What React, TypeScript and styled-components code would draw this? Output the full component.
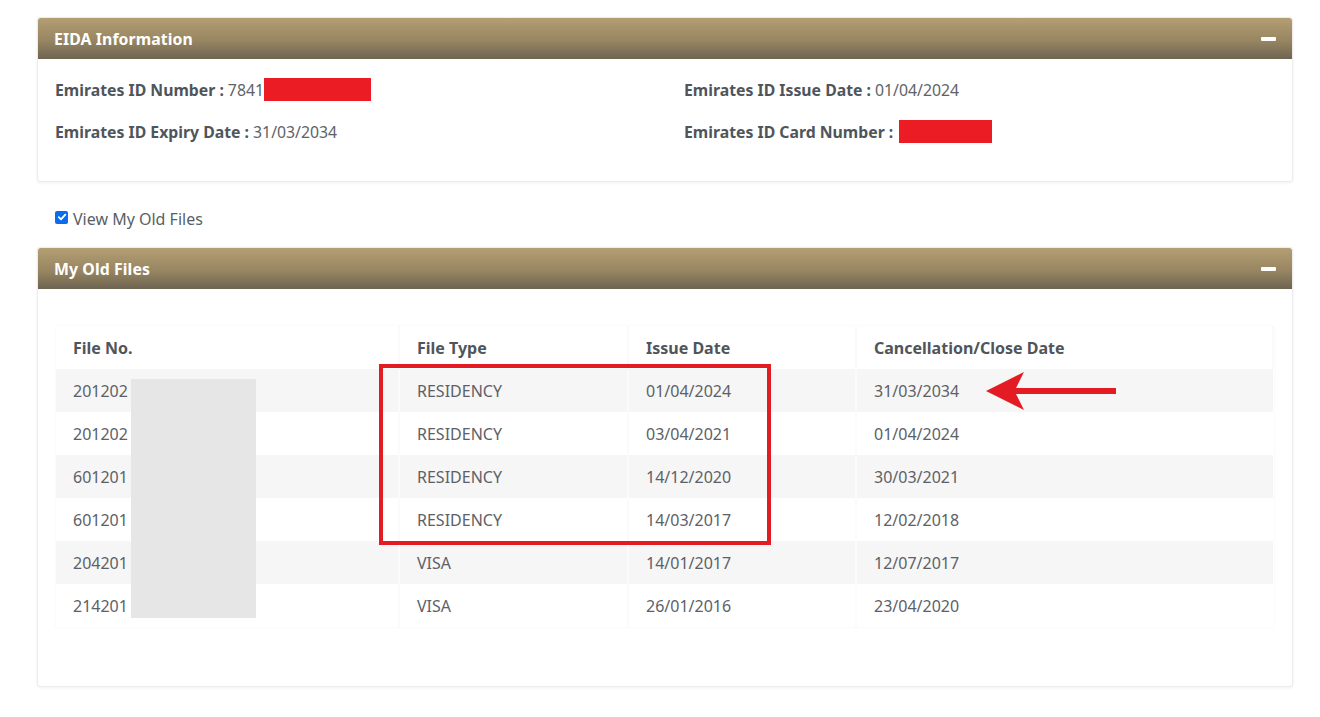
import React from 'react';
import styled, { createGlobalStyle } from 'styled-components';

const GlobalStyle = createGlobalStyle`
  body {
    margin: 0;
    background: #ffffff;
    font-family: "Noto Sans", "Open Sans", sans-serif;
    color: #555a60;
  }
`;

const Page = styled.div`
  padding: 17px 27px 20px 37px;
  display: flex;
  flex-direction: column;
`;

const Panel = styled.section`
  border: 1px solid #ececec;
  border-radius: 3px;
  box-shadow: 0 1px 3px rgba(0, 0, 0, 0.06);
  background: #fff;
`;

const PanelHeader = styled.div`
  height: 41px;
  display: flex;
  align-items: center;
  justify-content: space-between;
  padding: 0 16px 0 16px;
  background: linear-gradient(to bottom, #b49e74 0%, #978661 55%, #6d6451 100%);
  border-radius: 3px 3px 0 0;
`;

const PanelTitle = styled.h3`
  margin: 0;
  font-size: 15.8px;
  font-weight: 700;
  color: #ffffff;
  letter-spacing: 0.1px;
`;

const Collapse = styled.span`
  width: 15px;
  height: 4px;
  background: #ffffff;
  border-radius: 1px;
`;

const InfoBody = styled.div`
  display: grid;
  grid-template-columns: 629px 1fr;
  row-gap: 19px;
  padding: 19px 17px 38px;
`;

const InfoItem = styled.div`
  display: flex;
  align-items: center;
  height: 23px;
  font-size: 15.8px;
  color: #5e6267;
`;

const Label = styled.span`
  font-weight: 700;
  color: #4f555b;
  margin-right: 4px;
`;

const Redacted = styled.span<{ $w: number }>`
  display: inline-block;
  width: ${p => p.$w}px;
  height: 23px;
  background: #ec1c24;
`;

const CheckRow = styled.label`
  display: flex;
  align-items: center;
  gap: 5px;
  padding: 26px 0 17px 18px;
  font-size: 16px;
  color: #5a5f65;
`;

const Check = styled.span`
  width: 13px;
  height: 13px;
  border-radius: 2px;
  background: #0b6cf0;
  display: flex;
  align-items: center;
  justify-content: center;
  margin-top: -4px;
`;

const TableBody = styled.div`
  padding: 37px 18px 59px;
`;

const TableWrap = styled.div`
  position: relative;
  box-shadow: 0 0 2px rgba(0, 0, 0, 0.06);
`;

const Table = styled.table`
  width: 100%;
  border-collapse: collapse;
  font-size: 16px;
  table-layout: fixed;
`;

const Th = styled.th<{ $w?: number }>`
  box-sizing: border-box;
  text-align: left;
  font-weight: 700;
  color: #4f555b;
  height: 43px;
  padding: 0 17px;
  border-right: 2px solid #fafafa;
  width: ${p => (p.$w ? `${p.$w}px` : 'auto')};
`;

const Tr = styled.tr<{ $striped: boolean }>`
  background: ${p => (p.$striped ? '#f6f6f6' : '#ffffff')};
`;

const Td = styled.td`
  height: 43px;
  padding: 0 17px;
  color: #5d6166;
  border-right: 2px solid #fbfbfb;
  &:last-child { border-right: none; }
`;

const GreyMask = styled.div`
  position: absolute;
  left: 75px;
  top: 53px;
  width: 125px;
  height: 239px;
  background: #e6e6e6;
`;

const RedBox = styled.div`
  position: absolute;
  left: 323px;
  top: 38px;
  width: 392px;
  height: 181px;
  border: 4px solid #e31b23;
  box-sizing: border-box;
`;

const Arrow = styled.svg`
  position: absolute;
  left: 928px;
  top: 45px;
`;

const rows = [
  ['201202', 'RESIDENCY', '01/04/2024', '31/03/2034'],
  ['201202', 'RESIDENCY', '03/04/2021', '01/04/2024'],
  ['601201', 'RESIDENCY', '14/12/2020', '30/03/2021'],
  ['601201', 'RESIDENCY', '14/03/2017', '12/02/2018'],
  ['204201', 'VISA', '14/01/2017', '12/07/2017'],
  ['214201', 'VISA', '26/01/2016', '23/04/2020'],
];

export default function App() {
  return (
    <Page>
      <GlobalStyle />
      <Panel>
        <PanelHeader>
          <PanelTitle>EIDA Information</PanelTitle>
          <Collapse />
        </PanelHeader>
        <InfoBody>
          <InfoItem>
            <Label>Emirates ID Number :</Label>7841<Redacted $w={107} />
          </InfoItem>
          <InfoItem>
            <Label>Emirates ID Issue Date :</Label>01/04/2024
          </InfoItem>
          <InfoItem>
            <Label>Emirates ID Expiry Date :</Label>31/03/2034
          </InfoItem>
          <InfoItem>
            <Label>Emirates ID Card Number :</Label>
            <Redacted $w={93} style={{ marginLeft: 2 }} />
          </InfoItem>
        </InfoBody>
      </Panel>

      <CheckRow>
        <Check>
          <svg width="10" height="10" viewBox="0 0 10 10">
            <path d="M1.8 5.2 L4 7.4 L8.3 2.6" fill="none" stroke="#fff" strokeWidth="1.8" strokeLinecap="round" strokeLinejoin="round" />
          </svg>
        </Check>
        View My Old Files
      </CheckRow>

      <Panel>
        <PanelHeader>
          <PanelTitle>My Old Files</PanelTitle>
          <Collapse />
        </PanelHeader>
        <TableBody>
          <TableWrap>
            <Table>
              <thead>
                <tr>
                  <Th $w={343}>File No.</Th>
                  <Th $w={229}>File Type</Th>
                  <Th $w={228}>Issue Date</Th>
                  <Th>Cancellation/Close Date</Th>
                </tr>
              </thead>
              <tbody>
                {rows.map((r, i) => (
                  <Tr key={i} $striped={i % 2 === 0}>
                    {r.map((c, j) => (
                      <Td key={j}>{c}</Td>
                    ))}
                  </Tr>
                ))}
              </tbody>
            </Table>
            <GreyMask />
            <RedBox />
            <Arrow width="134" height="40" viewBox="0 0 134 40">
              <polygon points="2,20 40,1 32,17 132,17 132,23 32,23 40,39" fill="#e31b23" />
            </Arrow>
          </TableWrap>
        </TableBody>
      </Panel>
    </Page>
  );
}
